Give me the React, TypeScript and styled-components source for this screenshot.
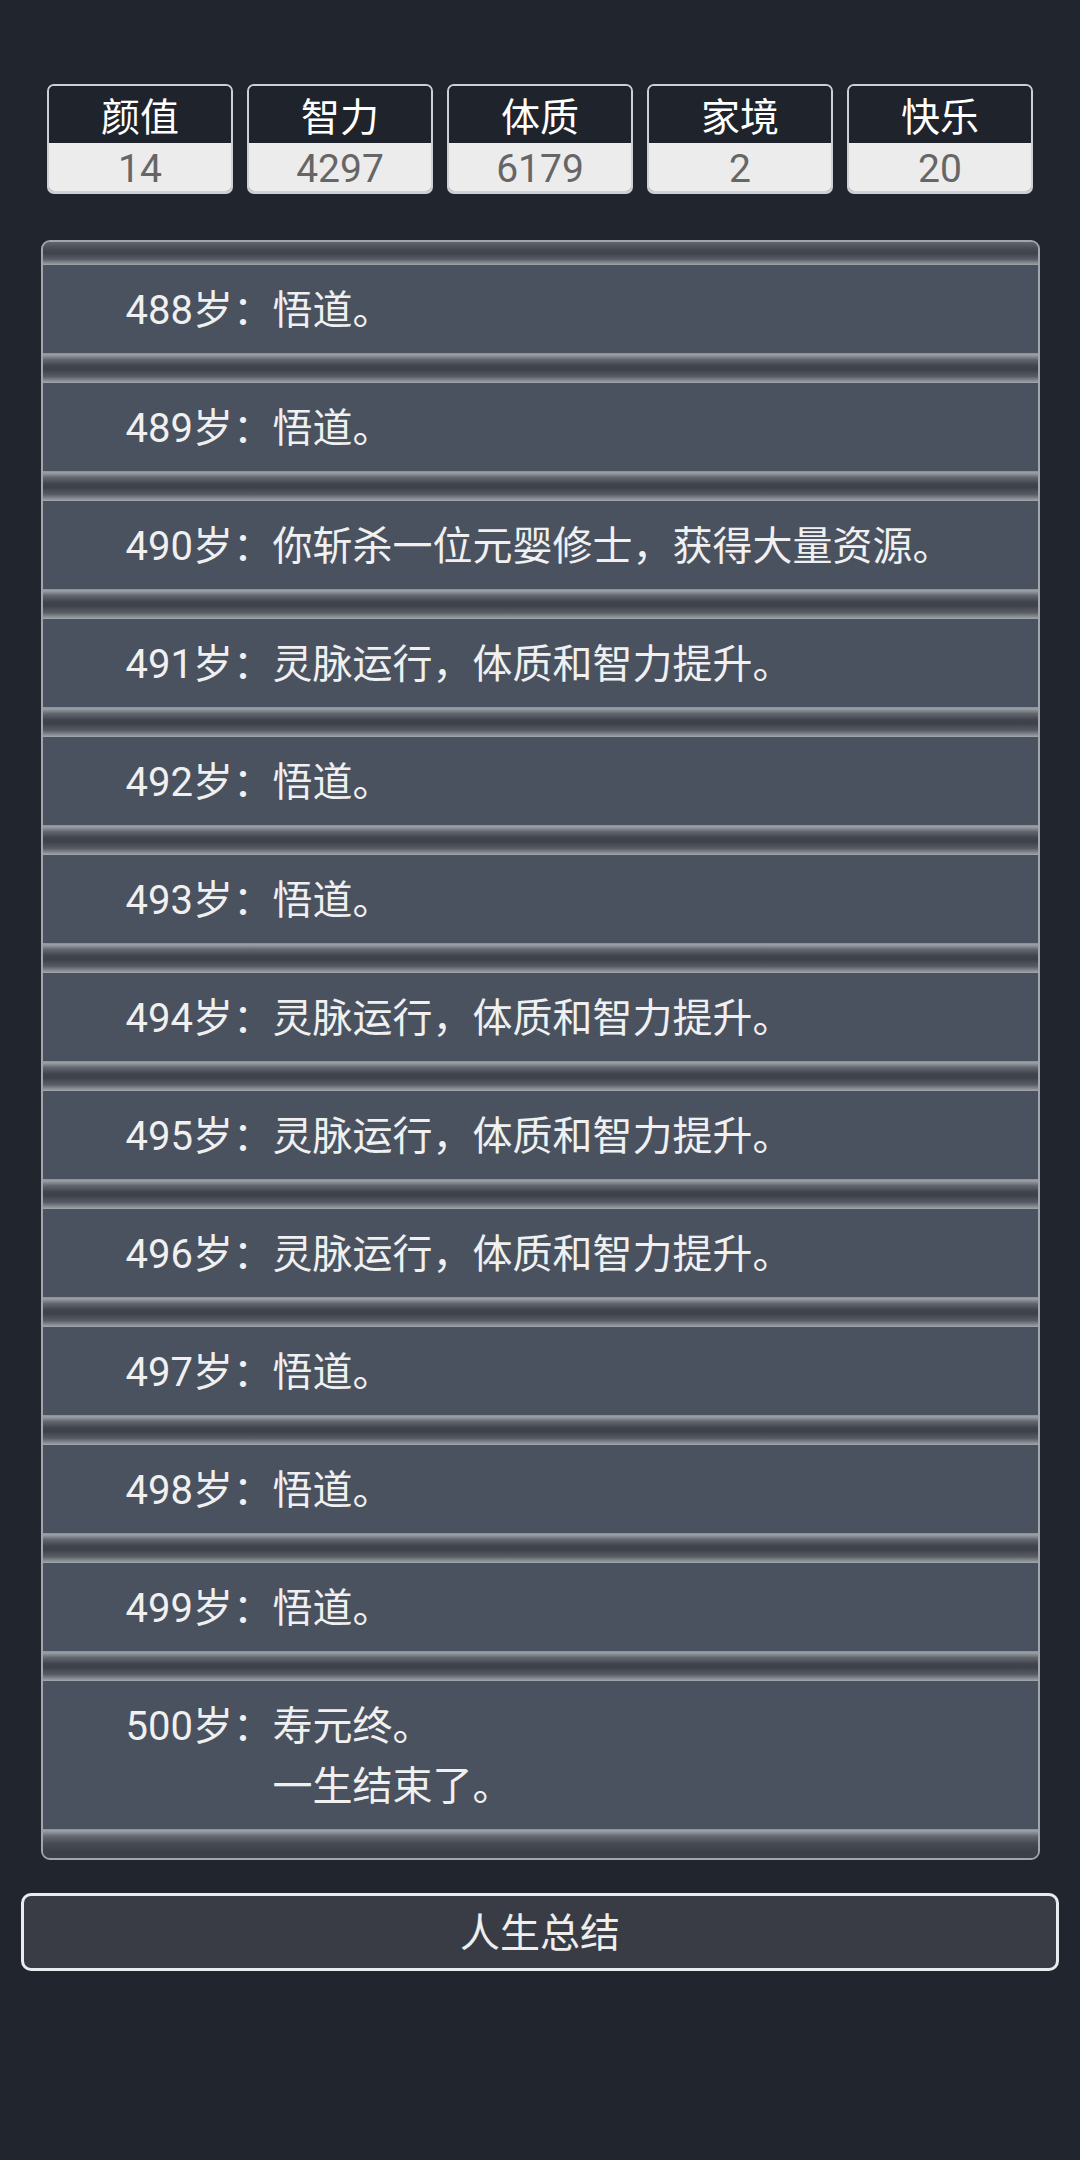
import React from "react";
import styled, { createGlobalStyle } from "styled-components";

const GlobalStyle = createGlobalStyle`
  html, body {
    margin: 0;
    padding: 0;
    background: #21252d;
  }
  body {
    font-family: Roboto, "Noto Sans CJK SC", "Noto Sans", sans-serif;
    color: #f0f0f0;
  }
`;

const Page = styled.div`
  width: 1080px;
  min-height: 2160px;
  box-sizing: border-box;
  padding-top: 84px;
  display: flex;
  flex-direction: column;
  align-items: center;
`;

const StatsRow = styled.div`
  display: flex;
  gap: 14px;
  justify-content: center;
`;

const Stat = styled.div`
  width: 186px;
  height: 110px;
  box-sizing: border-box;
  border: 2px solid #cdd0d4;
  border-bottom-width: 3px;
  border-radius: 7px;
  overflow: hidden;
  display: flex;
  flex-direction: column;
`;

const StatLabel = styled.div`
  height: 57px;
  flex-shrink: 0;
  background: #1f232b;
  color: #ffffff;
  font-size: 39px;
  line-height: 65px;
  text-align: center;
`;

const StatValue = styled.div`
  flex: 1;
  background: #ececec;
  color: #666666;
  font-size: 39px;
  line-height: 52px;
  text-align: center;
`;

const Panel = styled.div`
  margin-top: 46px;
  width: 999px;
  box-sizing: border-box;
  border: 2px solid #a2a6ac;
  border-radius: 9px;
  overflow: hidden;
  background: #4a5260;
  display: flex;
  flex-direction: column;
`;

const TopBand = styled.div`
  height: 23px;
  background: linear-gradient(
    to bottom,
    #61656d 0%,
    #464a52 30%,
    #3f434b 50%,
    #585d65 75%,
    #a1a6ad 100%
  );
`;

const Sep = styled.div`
  height: 30px;
  background: linear-gradient(
    to bottom,
    #8a8f96 0%,
    #9ba0a7 6%,
    #62676f 22%,
    #41454d 42%,
    #3d4149 55%,
    #575c64 78%,
    #a3a8af 100%
  );
`;

const BottomBand = styled.div`
  height: 29px;
  background: linear-gradient(
    to bottom,
    #8c9198 0%,
    #9da2a9 6%,
    #646971 25%,
    #474b53 50%,
    #3d4149 75%,
    #3b3f47 100%
  );
`;

const Row = styled.div`
  display: flex;
  align-items: flex-start;
  padding: 16px 0 12px 83px;
  background: #4a5260;
  font-size: 40px;
  line-height: 60px;
  color: #f0f0f0;
`;

const Age = styled.span`
  width: 147px;
  flex-shrink: 0;
  white-space: nowrap;
`;

const Events = styled.div`
  display: flex;
  flex-direction: column;
`;

const SummaryButton = styled.button`
  margin-top: 33px;
  width: 1038px;
  height: 78px;
  box-sizing: border-box;
  border: 3px solid #e8ebef;
  border-radius: 10px;
  background: #393c45;
  color: #eeeeee;
  font-family: Roboto, "Noto Sans CJK SC", sans-serif;
  font-size: 40px;
  line-height: 76px;
  padding: 0;
  text-align: center;
`;

const stats = [
  { label: "颜值", value: 14 },
  { label: "智力", value: 4297 },
  { label: "体质", value: 6179 },
  { label: "家境", value: 2 },
  { label: "快乐", value: 20 },
];

const WU = "悟道。";
const LM = "灵脉运行，体质和智力提升。";

const entries: { age: number; events: string[] }[] = [
  { age: 488, events: [WU] },
  { age: 489, events: [WU] },
  { age: 490, events: ["你斩杀一位元婴修士，获得大量资源。"] },
  { age: 491, events: [LM] },
  { age: 492, events: [WU] },
  { age: 493, events: [WU] },
  { age: 494, events: [LM] },
  { age: 495, events: [LM] },
  { age: 496, events: [LM] },
  { age: 497, events: [WU] },
  { age: 498, events: [WU] },
  { age: 499, events: [WU] },
  { age: 500, events: ["寿元终。", "一生结束了。"] },
];

export default function App() {
  return (
    <>
      <GlobalStyle />
      <Page>
        <StatsRow>
          {stats.map((s) => (
            <Stat key={s.label}>
              <StatLabel>{s.label}</StatLabel>
              <StatValue>{s.value}</StatValue>
            </Stat>
          ))}
        </StatsRow>
        <Panel>
          <TopBand />
          {entries.map((e, i) => (
            <React.Fragment key={e.age}>
              {i > 0 && <Sep />}
              <Row>
                <Age>{e.age}岁：</Age>
                <Events>
                  {e.events.map((t) => (
                    <span key={t}>{t}</span>
                  ))}
                </Events>
              </Row>
            </React.Fragment>
          ))}
          <BottomBand />
        </Panel>
        <SummaryButton>人生总结</SummaryButton>
      </Page>
    </>
  );
}
